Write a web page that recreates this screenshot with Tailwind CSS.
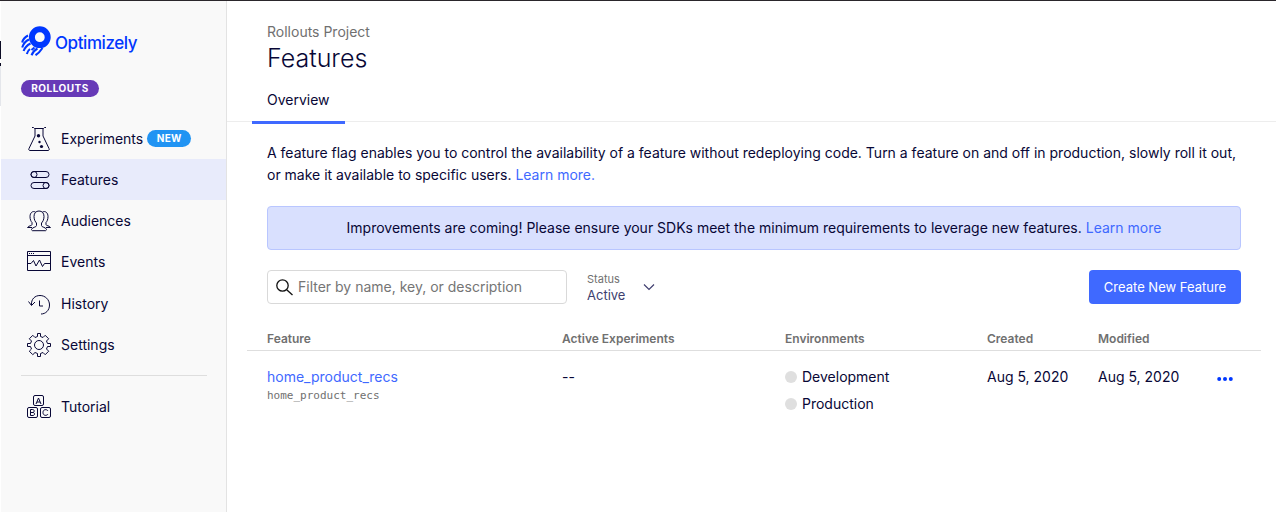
<!DOCTYPE html>
<html lang="en">
<head>
<meta charset="utf-8">
<meta name="viewport" content="width=device-width, initial-scale=1">
<title>Features - Optimizely Rollouts</title>
<script src="https://cdn.jsdelivr.net/npm/@tailwindcss/browser@4"></script>
</head>
<body class="relative min-h-screen flex border-t border-[#2a262b] bg-white font-['Inter',sans-serif] text-sm text-[#080736]">
<div class="absolute top-10 left-0 w-px" aria-hidden="true">
  <div class="h-[18px] bg-[#0b0b24]"></div>
  <div class="mt-1 h-[3px] bg-[#0b0b24]"></div>
  <div class="h-10 bg-[#e4e6eb]"></div>
</div>
<aside class="w-[227px] shrink-0 border-l border-l-white border-r border-r-[#e3e3e3] bg-[#f9f9f9] pt-[25px]">
  <a href="#" class="ml-5 flex items-center gap-1 text-[#0037ff]" aria-label="Optimizely">
    <svg class="size-[30px] shrink-0" viewBox="0 0 30 30" fill="none" stroke="currentColor">
      <circle cx="18.800" cy="11.200" r="7.900" stroke-width="6"/>
      <g stroke-width="2.100">
        <path d="M7 9.500C4 11 2 13 1.200 16.500M8 13.500C5 15 2.500 17 1.200 21.500M9.500 17.500C6.500 19 4 21 2.600 25M9 23C7.500 24 6.500 25.500 5.800 28M13.500 21.500L10.500 24M16.500 22.500C13.500 24 12 26 10.500 29.200M21.500 22C19.500 25 18 27 14.500 29.200"/>
      </g>
    </svg>
    <span class="pt-1 text-[17px] leading-6 font-medium tracking-tight">Optimizely</span>
  </a>
  <span class="mt-6 ml-5 flex h-[17px] w-[78px] items-center justify-center rounded-full bg-[#673ab7] text-[10px] font-bold tracking-wider text-white">ROLLOUTS</span>
  <nav class="mt-[21px]" aria-label="Main">
    <a href="#" class="flex h-[41px] items-center gap-2.5 pl-[26px]">
      <svg class="size-6" viewBox="0 0 24 24" fill="none" stroke="currentColor"><path d="M5 .500h1.500l1 1h9l1-1H19M8 1.500V9L2 21.500c-.6 1.300 0 2 1 2h18c1 0 1.600-.7 1-2L16 9V1.500"/><g fill="currentColor" stroke="none"><circle cx="11.500" cy="8.700" r="1.700"/><circle cx="12.500" cy="15" r="1.200"/><circle cx="14.500" cy="19.500" r="1.600"/></g></svg>
      <span class="flex items-center gap-1">Experiments <span class="flex h-[17px] w-11 items-center justify-center rounded-full bg-[#2194f3] text-[10px] font-bold tracking-wide text-white">NEW</span></span>
    </a>
    <a href="#" aria-current="page" class="flex h-[41px] items-center gap-2.5 bg-[#e8ebfb] pl-[26px]">
      <svg class="size-6" viewBox="0 0 24 24" fill="none" stroke="currentColor"><rect x="4" y="3.500" width="18" height="6" rx="3"/><circle cx="7" cy="6.500" r="3"/><rect x="4" y="14.500" width="18" height="6" rx="3"/><circle cx="19" cy="17.500" r="3"/></svg>
      Features
    </a>
    <a href="#" class="flex h-[41px] items-center gap-2.5 pl-[26px]">
      <svg class="size-6" viewBox="0 0 24 24" fill="none" stroke="currentColor"><path d="M12 2c3 0 5 2 5 5.500 0 3.500-1.500 5.500-2.500 6.500v2.500c0 2 4.500 1.500 5 4 0 .8-.5.800-1 1.200h-13c-.5-.4-1-.4-1-1.200.5-2.500 5-2 5-4V14C8.500 13 7 11 7 7.500 7 4 9 2 12 2z"/><path d="M8.500 3C5.500 1.500 3 4 3 7.500c0 3 1 5 2 6v2c0 1.500-3.500 1-4.500 3H5M15.500 3C18.500 1.500 21 4 21 7.500c0 3-1 5-2 6v2c0 1.500 3.500 1 4.500 3H19"/></svg>
      Audiences
    </a>
    <a href="#" class="flex h-[42px] items-center gap-2.5 pl-[26px]">
      <svg class="size-6" viewBox="0 0 24 24" fill="none" stroke="currentColor"><path d="M.500 1.500h23v19H.500zM.500 5.500h23M2 3.500h1M4 3.500h1M6 3.500h1M.500 13.500H4l2.500-3L9 16l3.500-6 3 6.500 2-3H23"/></svg>
      Events
    </a>
    <a href="#" class="flex h-[41px] items-center gap-2.5 pl-[26px]">
      <svg class="size-6" viewBox="0 0 24 24" fill="none" stroke="currentColor"><path d="M4.500 13C4 7 8 3.500 13 3.500s9.500 4 9.500 9.500-4 9-8.500 9M1.500 9.500l3 4L8 10M12.500 8.500V14H16"/></svg>
      History
    </a>
    <a href="#" class="flex h-[41px] items-center gap-2.5 pl-[26px]">
      <svg class="size-6" viewBox="0 0 24 24" fill="none" stroke="currentColor"><circle cx="12" cy="12" r="4.500"/><path d="M10.500.500h3v3l2.500 1 2.200-2.200 3.500 3.500L19.500 8l1 2.500h3v3h-3l-1 2.500 2.200 2.200-3.500 3.500-2.200-2.200-2.500 1v3h-3v-3l-2.500-1-2.200 2.200-3.500-3.500L4.500 16l-1-2.500h-3v-3h3l1-2.500-2.200-2.200 3.500-3.500L8 4.500l2.500-1z"/></svg>
      Settings
    </a>
    <hr class="ml-5 mr-[19px] mt-2.5 mb-2.5 border-[#dedede]">
    <a href="#" class="flex h-[41px] items-center gap-2.5 pl-[26px]">
      <svg class="size-6" viewBox="0 0 24 24" fill="none" stroke="currentColor"><rect x="6.500" y=".500" width="10" height="10" rx="1.500"/><rect x=".500" y="12.500" width="10" height="10" rx="1.500"/><rect x="13.500" y="12.500" width="10" height="10" rx="1.500"/><path d="M9 9l2.500-6L14 9M10 7h3M3.500 14.500v6H6c2 0 2-3 0-3H3.500h2.200c2 0 2-3 0-3zM21 16c-1-2-5-2-5 1.500s4 3.500 5 1.500"/></svg>
      Tutorial
    </a>
  </nav>
</aside>
<main class="min-w-0 flex-1">
  <header class="border-b border-[#ededed] px-10 pt-[21px]">
    <p class="leading-5 text-[#707070]">Rollouts Project</p>
    <h1 class="text-[25px] leading-8 font-light">Features</h1>
    <div class="-mb-[3px] -ml-[15px] flex pt-1.5">
      <a href="#" aria-current="page" class="border-b-3 border-[#3f69ff] px-[15px] pt-2.5 pb-3 leading-[19px]">Overview</a>
    </div>
  </header>
  <div class="pt-5 pr-[35px] pl-10">
    <p class="leading-[22px]">A feature flag enables you to control the availability of a feature without redeploying code. Turn a feature on and off in production, slowly roll it out, or make it available to specific users. <a href="#" class="text-[#3f69ff]">Learn more.</a></p>
    <p class="mt-5 flex h-11 items-center justify-center gap-1 rounded border border-[#b9c6ff] bg-[#d9e0fe]">Improvements are coming! Please ensure your SDKs meet the minimum requirements to leverage new features. <a href="#" class="text-[#3f69ff]">Learn more</a></p>
    <div class="mt-5 flex h-[34px] items-center">
      <label class="flex h-full w-[300px] items-center gap-[5px] rounded border border-[#d9d9d9] pl-2">
        <svg class="size-[17px] shrink-0" viewBox="0 0 17 17" fill="none" stroke="#111" stroke-width="1.300"><circle cx="6.500" cy="6.500" r="5.700"/><path d="M10.700 10.700l5.800 5.300"/></svg>
        <input type="search" aria-label="Filter features" placeholder="Filter by name, key, or description" class="h-full min-w-0 flex-1 pb-px outline-none placeholder:text-[#757575]">
      </label>
      <div class="relative ml-5 flex w-[68px] flex-col">
        <label for="status" class="text-[11px] leading-4 text-[#707070]">Status</label>
        <select id="status" class="appearance-none text-[13px] leading-4 text-[#403f70]"><option>Active</option></select>
        <svg class="pointer-events-none absolute top-3 right-0 h-2 w-3" viewBox="0 0 12 8" fill="none" stroke="#403f70" stroke-width="1.200"><path d="M1 1.500l5 5 5-5"/></svg>
      </div>
      <button class="ml-auto h-full w-[152px] rounded bg-[#3f69ff] text-[13px] text-white">Create New Feature</button>
    </div>
  </div>
  <table class="mx-5 mt-5 w-[calc(100%-35px)] table-fixed text-left">
    <thead class="border-b border-[#dedede] text-xs text-[#707070]">
      <tr class="h-[26px]">
        <th class="pt-1 pl-5 font-semibold">Feature</th>
        <th class="w-[223px] pt-1 font-semibold">Active Experiments</th>
        <th class="w-[202px] pt-1 font-semibold">Environments</th>
        <th class="w-[111px] pt-1 font-semibold">Created</th>
        <th class="w-[119px] pt-1 font-semibold">Modified</th>
        <th class="w-11" aria-label="Actions"></th>
      </tr>
    </thead>
    <tbody>
      <tr class="align-top leading-5">
        <td class="pt-4 pl-5"><a href="#" class="text-[#3f69ff]">home_product_recs</a><div class="font-['DejaVu_Sans_Mono',monospace] text-[11px] leading-[18px] text-[#707070]">home_product_recs</div></td>
        <td class="pt-4">--</td>
        <td class="pt-4">
          <ul class="flex flex-col gap-[7px]">
            <li class="flex items-center gap-[5px]"><span class="size-3 rounded-full bg-[#dfdfdf]"></span>Development</li>
            <li class="flex items-center gap-[5px]"><span class="size-3 rounded-full bg-[#dfdfdf]"></span>Production</li>
          </ul>
        </td>
        <td class="pt-4">Aug 5, 2020</td>
        <td class="pt-4">Aug 5, 2020</td>
        <td class="pt-4"><button aria-label="More actions" class="flex h-6 items-center"><svg class="h-1 w-4" viewBox="0 0 16 4" fill="#0037ff"><circle cx="2.200" cy="2" r="2"/><circle cx="8" cy="2" r="2"/><circle cx="13.800" cy="2" r="2"/></svg></button></td>
      </tr>
    </tbody>
  </table>
</main>
</body>
</html>
